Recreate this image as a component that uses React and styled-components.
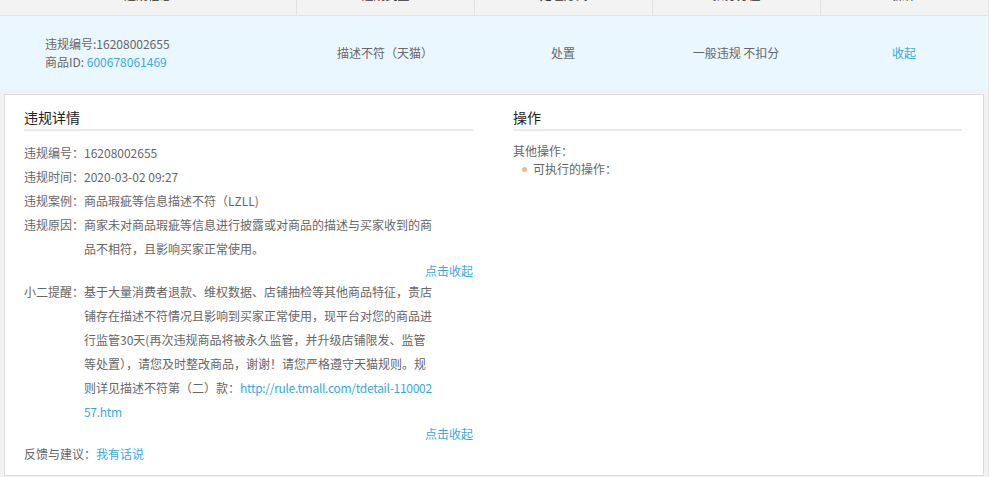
import React from "react";
import styled, { createGlobalStyle } from "styled-components";

const GlobalStyle = createGlobalStyle`
  html, body {
    margin: 0;
    padding: 0;
    overflow: hidden;
    background: #fff;
  }
  body {
    font-family: "Microsoft YaHei", "Noto Sans CJK SC", sans-serif;
    font-size: 12px;
    color: #666;
  }
  * { box-sizing: border-box; }
`;

const COLUMNS = "296px 178px 178px 168px 1fr";

const Table = styled.div`
  width: 989px;
  border-right: 1px solid #e6e6e6;
`;

const HeadRow = styled.div`
  display: grid;
  grid-template-columns: ${COLUMNS};
  height: 16px;
  background: #f3f3f3;
  border-bottom: 1px solid #e3e3e3;
`;

const HeadCell = styled.div`
  overflow: hidden;
  text-align: center;
  color: #333;
  border-left: ${(p) => (p.$first ? "none" : "1px solid #e2e2e2")};

  span {
    display: block;
    line-height: 20px;
    margin-top: -15px;
  }
`;

const DataRow = styled.div`
  display: grid;
  grid-template-columns: ${COLUMNS};
  height: 73px;
  align-items: center;
  background: #ebf7fe;
`;

const Cell = styled.div`
  text-align: ${(p) => (p.$left ? "left" : "center")};
  padding-left: ${(p) => (p.$left ? "45px" : "0")};
  line-height: 18px;
  color: #666;
`;

const Link = styled.a`
  color: #39a7ec;
  text-decoration: none;
  cursor: pointer;
`;

const UrlLink = styled(Link)`
  letter-spacing: -0.3px;
`;

const DetailWrap = styled.div`
  background: #f2f2f2;
  padding: 5px 4px 2px;
`;

const Panel = styled.div`
  background: #fff;
  border: 1px solid #dcdcdc;
  padding: 12px 19px 11px;
  display: grid;
  grid-template-columns: 449px 449px;
  column-gap: 40px;
`;

const Section = styled.section`
  display: flex;
  flex-direction: column;
`;

const SectionTitle = styled.h3`
  margin: 0 0 10px;
  font-size: 14px;
  font-weight: normal;
  line-height: 20px;
  color: #222;
  padding-bottom: 2px;
  border-bottom: 2px solid #ebebeb;
`;

const InfoRow = styled.div`
  display: grid;
  grid-template-columns: 60px 352px;
  line-height: 24px;
`;

const Label = styled.span`
  color: #666;
`;

const Value = styled.span`
  color: #666;
  word-break: break-all;
`;

const Collapse = styled.div`
  text-align: right;
  line-height: 19px;
`;

const Feedback = styled.div`
  line-height: 21px;
`;

const OpBlock = styled.div`
  margin-top: 1px;
  line-height: 18px;
`;

const OpList = styled.ul`
  list-style: none;
  margin: 0;
  padding: 0 0 0 20px;
`;

const OpItem = styled.li`
  position: relative;

  &::before {
    content: "";
    position: absolute;
    left: -11px;
    top: 7px;
    width: 5px;
    height: 5px;
    border-radius: 50%;
    background: #f8b58c;
  }
`;

const headers = ["违规信息", "违规类型", "处理方式", "扣分分值", "操作"];

export default function App() {
  return (
    <>
      <GlobalStyle />
      <Table>
        <HeadRow>
          {headers.map((h, i) => (
            <HeadCell key={h} $first={i === 0}>
              <span>{h}</span>
            </HeadCell>
          ))}
        </HeadRow>

        <DataRow>
          <Cell $left>
            <div>违规编号:16208002655</div>
            <div>
              商品ID: <Link>600678061469</Link>
            </div>
          </Cell>
          <Cell>描述不符（天猫）</Cell>
          <Cell>处置</Cell>
          <Cell>一般违规 不扣分</Cell>
          <Cell>
            <Link>收起</Link>
          </Cell>
        </DataRow>

        <DetailWrap>
          <Panel>
            <Section>
              <SectionTitle>违规详情</SectionTitle>
              <InfoRow>
                <Label>违规编号：</Label>
                <Value>16208002655</Value>
              </InfoRow>
              <InfoRow>
                <Label>违规时间：</Label>
                <Value>2020-03-02 09:27</Value>
              </InfoRow>
              <InfoRow>
                <Label>违规案例：</Label>
                <Value>商品瑕疵等信息描述不符（LZLL)</Value>
              </InfoRow>
              <InfoRow>
                <Label>违规原因：</Label>
                <Value>
                  商家未对商品瑕疵等信息进行披露或对商品的描述与买家收到的商品不相符，且影响买家正常使用。
                </Value>
              </InfoRow>
              <Collapse>
                <Link>点击收起</Link>
              </Collapse>
              <InfoRow>
                <Label>小二提醒：</Label>
                <Value>
                  基于大量消费者退款、维权数据、店铺抽检等其他商品特征，贵店铺存在描述不符情况且影响到买家正常使用，现平台对您的商品进行监管30天(再次违规商品将被永久监管，并升级店铺限发、监管等处置），请您及时整改商品，谢谢！请您严格遵守天猫规则。规则详见描述不符第（二）款：
                  <UrlLink>http://rule.tmall.com/tdetail-11000257.htm</UrlLink>
                </Value>
              </InfoRow>
              <Collapse>
                <Link>点击收起</Link>
              </Collapse>
              <Feedback>
                反馈与建议：<Link>我有话说</Link>
              </Feedback>
            </Section>

            <Section>
              <SectionTitle>操作</SectionTitle>
              <OpBlock>
                <div>其他操作：</div>
                <OpList>
                  <OpItem>可执行的操作：</OpItem>
                </OpList>
              </OpBlock>
            </Section>
          </Panel>
        </DetailWrap>
      </Table>
    </>
  );
}
